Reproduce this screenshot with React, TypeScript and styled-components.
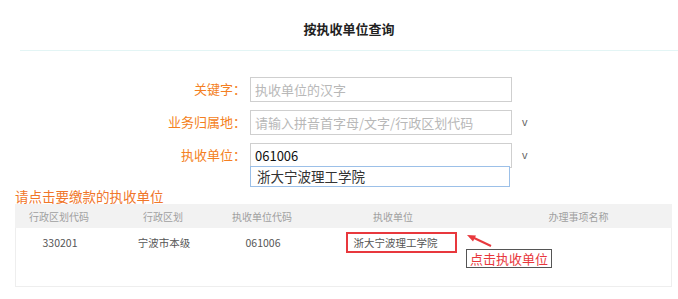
import React from 'react'
import styled, { createGlobalStyle } from 'styled-components'

const GlobalStyle = createGlobalStyle`
  html, body {
    margin: 0;
    padding: 0;
    background: #fff;
  }
  body {
    font-family: "Noto Sans CJK SC", "Noto Sans", sans-serif;
    width: 678px;
    height: 299px;
    overflow: hidden;
  }
`

const Page = styled.div`
  width: 678px;
  height: 299px;
`

const TitleBar = styled.div`
  box-sizing: border-box;
  margin-left: 20px;
  height: 51px;
  padding-top: 6px;
  border-bottom: 1px solid #e3f5f5;
  display: flex;
  align-items: center;
  justify-content: center;
  font-size: 13px;
  font-weight: bold;
  color: #222;
`

const Form = styled.div`
  padding-top: 25px;
`

const FormRow = styled.div`
  display: grid;
  grid-template-columns: 250px 262px 1fr;
  align-items: center;
  height: 25px;
  margin-bottom: 8px;

  &:last-child {
    margin-bottom: 0;
  }
`

const Label = styled.label`
  text-align: right;
  padding-right: 4px;
  font-size: 13px;
  color: #f47f22;
  white-space: nowrap;
`

const InputWrap = styled.div`
  position: relative;
  height: 25px;
`

const Input = styled.input`
  box-sizing: border-box;
  width: 262px;
  height: 25px;
  border: 1px solid #cfcfcf;
  padding: 0 4px;
  font-family: "Noto Sans CJK SC", "Noto Sans", sans-serif;
  font-size: 13px;
  color: #111;
  outline: none;

  &::placeholder {
    color: #b8b8b8;
  }
`

const Chevron = styled.span`
  padding-left: 10px;
  font-family: "Liberation Sans", sans-serif;
  font-size: 11px;
  color: #666;
`

const Suggest = styled.div`
  position: absolute;
  top: 24px;
  left: 0;
  box-sizing: border-box;
  width: 260px;
  height: 21px;
  border: 1px solid #9cc0e8;
  background: #fff;
  padding-left: 6px;
  font-size: 13.5px;
  line-height: 19px;
  color: #333;
`

const Note = styled.div`
  margin: 21px 0 0 15px;
  font-size: 13.5px;
  line-height: 16px;
  color: #f0762a;
`

const Table = styled.div`
  margin-left: 15px;
  width: 657px;
`

const Cols = styled.div<{ $head?: boolean }>`
  display: grid;
  grid-template-columns: 88px 120px 78px 184px 1fr;
  align-items: center;
  text-align: center;
  height: ${({ $head }) => ($head ? '24px' : '28px')};
  background: ${({ $head }) => ($head ? '#f2f2f2' : '#fff')};
  font-size: ${({ $head }) => ($head ? '10px' : '10.5px')};
  color: ${({ $head }) => ($head ? '#a0a0a0' : '#555')};
`

const Body = styled.div`
  height: 58px;
  border: 1px solid #eeeeee;
  border-top: none;
`

const Row = styled(Cols)`
  position: relative;
`

const Marked = styled.span`
  display: inline-block;
  border: 2px solid #e8383d;
  padding: 2px 17px 2px 6px;
  line-height: 13px;
  margin-left: 14px;
`

const Arrow = styled.svg`
  position: absolute;
  left: 449px;
  top: 5px;
`

const Hint = styled.div`
  position: absolute;
  left: 450px;
  top: 21px;
  border: 1px solid #555;
  padding: 0 3px;
  font-size: 13px;
  line-height: 17px;
  color: #e8383d;
  background: #fff;
`

const App = () => {
  return (
    <Page>
      <GlobalStyle />
      <TitleBar>按执收单位查询</TitleBar>

      <Form>
        <FormRow>
          <Label>关键字：</Label>
          <InputWrap>
            <Input placeholder='执收单位的汉字' />
          </InputWrap>
        </FormRow>

        <FormRow>
          <Label>业务归属地：</Label>
          <InputWrap>
            <Input placeholder='请输入拼音首字母/文字/行政区划代码' />
          </InputWrap>
          <Chevron>v</Chevron>
        </FormRow>

        <FormRow>
          <Label>执收单位：</Label>
          <InputWrap>
            <Input defaultValue='061006' />
            <Suggest>浙大宁波理工学院</Suggest>
          </InputWrap>
          <Chevron>v</Chevron>
        </FormRow>
      </Form>

      <Note>请点击要缴款的执收单位</Note>

      <Table>
        <Cols $head>
          <span>行政区划代码</span>
          <span>行政区划</span>
          <span>执收单位代码</span>
          <span>执收单位</span>
          <span>办理事项名称</span>
        </Cols>
        <Body>
          <Row>
            <span>330201</span>
            <span>宁波市本级</span>
            <span>061006</span>
            <span>
              <Marked>浙大宁波理工学院</Marked>
            </span>
            <span></span>

            <Arrow width='30' height='16' viewBox='0 0 30 16'>
              <line x1='26' y1='13' x2='7' y2='4' stroke='#e8383d' strokeWidth='2' />
              <polygon points='2,2 11,2.5 8,8.5' fill='#e8383d' />
            </Arrow>
            <Hint>点击执收单位</Hint>
          </Row>
        </Body>
      </Table>
    </Page>
  )
}

export default App
